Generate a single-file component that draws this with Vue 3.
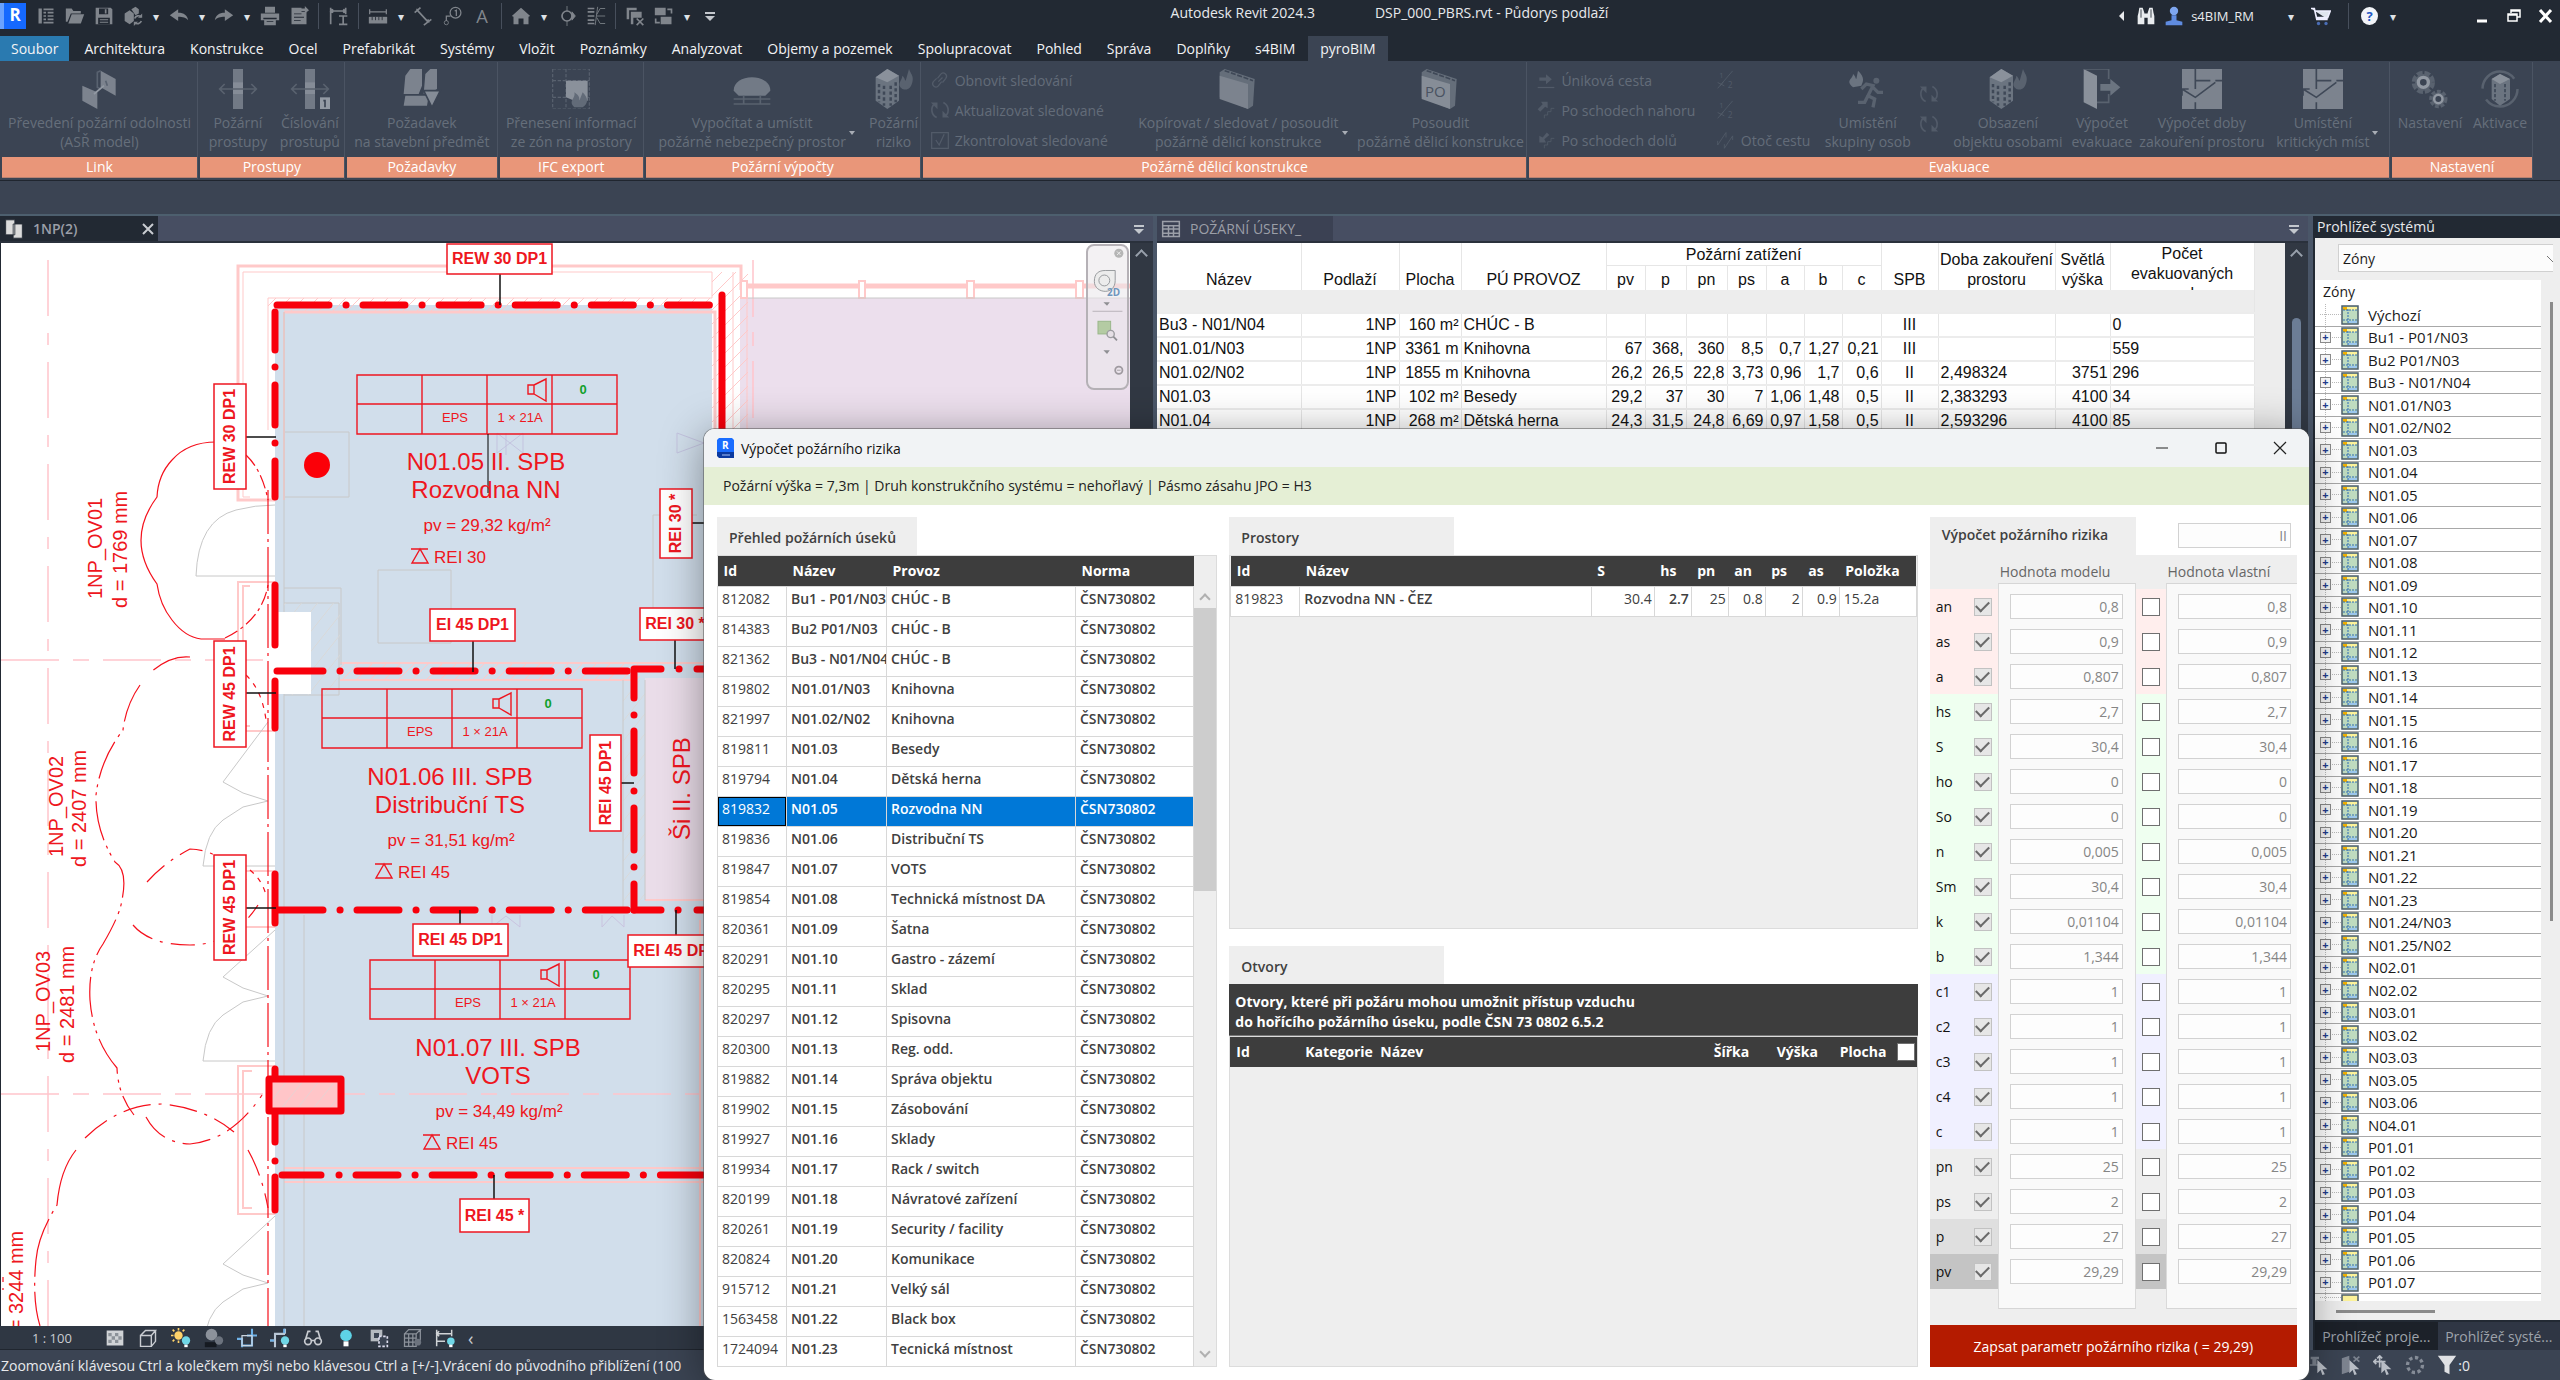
<script setup>
import { ref } from 'vue'

// stroke/fill fragments, all drawn on a 24x24 box
const icons = {
  home: '<path d="M3 3h4v18H3zM9 3h12v2H9zM9 7h3v2H9zM14 7h7v2h-7zM9 11h3v2H9zM14 11h7v2h-7zM9 15h3v2H9zM14 15h7v2h-7zM9 19h12v2H9z" fill="currentColor"/>',
  open: '<path d="M1 3h7l2 3h9v3H7L3 19H1z" fill="currentColor"/><path d="M8 10h15l-4 11H4z" fill="currentColor"/>',
  save: '<path d="M2 2h18l2 2v18H2z" fill="currentColor"/><path d="M6 3h11v7H6zM5 14h14v8H5z" fill="#222933"/><path d="M13 4h2v5h-2zM7 16h10v1H7zM7 19h10v1H7z" fill="currentColor"/>',
  sync: '<path d="M2 9l6-4 5 4v9l-5 4-6-4zM10 4l5-3 4 3v5l-4 2z" fill="currentColor"/><path d="M14 15a5 5 0 0 1 8-2M22 18a5 5 0 0 1-8 2" stroke="currentColor" stroke-width="2" fill="none"/><path d="M23 9v5h-5zM13 24v-5h5z" fill="currentColor"/>',
  undo: '<path d="M1 11l10-7v4c7 0 11 3 12 9-3-3-6-4-12-4v5z" fill="currentColor"/>',
  redo: '<path d="M23 11L13 4v4C6 8 2 11 1 17c3-3 6-4 12-4v5z" fill="currentColor"/>',
  print: '<path d="M6 1h12v7H6zM1 9h22v8H1zM5 15h14v8H5z" fill="currentColor"/><path d="M4 14h16v2H4zM8 18h8v1H8z" fill="#222933"/>',
  pdf: '<path d="M3 2h12v5h6v15H3z" fill="currentColor"/><path d="M6 9h9v1H6zM6 13h12v1H6zM6 17h8v1H6z" fill="#222933"/><path d="M13 3h6V0l5 5-5 4V6h-6z" fill="currentColor"/>',
  dimv: '<path d="M2 2v20M2 6h18M20 2v8M12 12h10M17 12v10M12 22h10M5 4L2 6l3 2M17 4l3 2-3 2" stroke="currentColor" stroke-width="2" fill="none"/>',
  measure: '<path d="M2 4v6M2 7h20M22 4v6" stroke="currentColor" stroke-width="1.5" fill="none"/><path d="M1 13h22v8H1z" fill="currentColor"/><path d="M5 13v4M9 13v4M13 13v4M17 13v4" stroke="#222933"/>',
  align: '<path d="M2 8L9 2M5 5l13 14M13 23l9-7M4 4l3 1M19 20l-1-4" stroke="currentColor" stroke-width="2" fill="none"/>',
  tag: '<circle cx="15" cy="8" r="6.500" stroke="currentColor" stroke-width="1.500" fill="none"/><path d="M14 6l2-1v7M9 12H4v6" stroke="currentColor" stroke-width="1.500" fill="none"/><circle cx="4" cy="20" r="2.500" stroke="currentColor" fill="none"/>',
  text: '<text x="12" y="20" text-anchor="middle" font-size="22" font-family="Open Sans, sans-serif" fill="currentColor">A</text>',
  house: '<path d="M1 12L12 2l11 10-2 1v9h-6v-7H9v7H3v-9z" fill="currentColor"/>',
  section: '<circle cx="12" cy="12" r="6" stroke="currentColor" stroke-width="2" fill="none"/><path d="M12 0v6M12 18v6M18 7l4 5-4 5z" stroke="currentColor" fill="currentColor"/>',
  thin: '<path d="M2 3h8M2 7h8M2 12h8M2 17h8M2 21h8" stroke="currentColor" stroke-width="2"/><path d="M13 10l4-7h6M13 12h10M13 14l4 7h6M11 23L14 1" stroke="currentColor" fill="none"/>',
  closeViews: '<path d="M2 2h12v3H5v11H2z" fill="currentColor"/><path d="M7 7h13v7H10v8H7z" fill="currentColor"/><path d="M14 15l8 8M22 15l-8 8" stroke="currentColor" stroke-width="2"/>',
  switchViews: '<path d="M1 2h13v9H1zM8 13h13v9H8z" fill="currentColor"/><path d="M16 4h5v5M7 20H2v-5" stroke="currentColor" stroke-width="2" fill="none"/>',
  link2: '<path d="M13 1l9 5v10l-9-5zM2 10l9 4v10l-9-5z" fill="#7c838e"/><path d="M13 1l-2 1v9l2 1M16 7l1 3" stroke="#596270" fill="none"/><path d="M9 15l6-5" stroke="#9299a3"/>',
  pipe: '<path d="M9 0h6v24H9z" fill="#727a86"/><path d="M9 8h6v7H9z" fill="#858c97"/><path d="M1 12h22M4 9l-3 3 3 3M20 9l3 3-3 3" stroke="#59626f" fill="none"/>',
  pipeNo: '<path d="M9 0h6v24H9z" fill="#727a86"/><path d="M9 8h6v7H9z" fill="#858c97"/><path d="M1 12h22M4 9l-3 3 3 3M20 9l3 3-3 3" stroke="#59626f" fill="none"/><rect x="18" y="17" width="6" height="7" fill="#939aa4"/><path d="M20 19h1v4" stroke="#3b4453" fill="none"/>',
  request: '<path d="M2 4l3-4h7v10l-2 5H1zM14 3l3-3h4v12l-5 3h-3zM2 16h14l-1 6H1z" fill="#7c838e"/><path d="M13 13h10l-5 10z" fill="#858c97" stroke="#3b4453"/>',
  ifc: '<path d="M1 0h22v24H1zM9 0v24M1 7h22M1 17h22" stroke="#59626f" stroke-width=".7" fill="none" stroke-dasharray="2 1"/><path d="M9 7h13v12h-8L9 17z" fill="#8a919b"/><path d="M14 23c-4-4 1-5 0-9 3 2 3 3 3 5l2-5c4 4 3 7 0 9z" fill="#626b78"/>',
  space: '<path d="M1 13c0-5 5-8 11-8s11 3 11 8l-3 3H4z" fill="#727a86"/><path d="M7 16v5M17 16v5M1 18h22M1 21h22" stroke="#59626f"/>',
  building: '<path d="M1 5l7-5 7 4v15l-7 5-7-5z" fill="#6b7480"/><path d="M1 5l7-5 7 4-7 4z" fill="#8a919b"/><path d="M3 9v11M6 10v12M10 10v12M13 8v12" stroke="#3f4857" stroke-width="1.500" stroke-dasharray="2 1.500"/><path d="M17 12c-4-3 0-5 0-8 2 2 1 2 2 3l2-7c1 3 3 4 2 8s-3 5-6 4z" fill="#59626f"/>',
  wall: '<path d="M1 2l3-2 18 6-1 16-3 2L1 17z" fill="#656e7a"/><path d="M1 4l17 5v15L1 18z" fill="#7c838e"/><path d="M4 1l17 6" stroke="#3f4857" stroke-dasharray="3 1"/>',
  wallPo: '<path d="M1 2l3-2 18 6-1 16-3 2L1 17z" fill="#656e7a"/><path d="M1 4l17 5v15L1 18z" fill="#868d97"/><path d="M4 1l17 6" stroke="#3f4857" stroke-dasharray="3 1"/><text x="3" y="17" font-size="9" font-family="Open Sans, sans-serif" fill="#4a5361">PO</text>',
  chain: '<path d="M10 14l5-5M9 10l4-5c3-4 9 1 6 5l-4 5M14 14l-4 5c-3 4-9-1-6-5l4-4" stroke="currentColor" stroke-width="1.500" fill="none"/>',
  refresh: '<path d="M8 21A10 10 0 0 1 5 5M16 3a10 10 0 0 1 3 16" stroke="currentColor" stroke-width="2" fill="none"/><path d="M1 3h8v8zM23 21h-8v-8z" fill="currentColor"/>',
  check: '<path d="M2 3h20v19H2zM7 12l4 6 6-13" stroke="currentColor" stroke-width="1.500" fill="none"/>',
  exit: '<path d="M2 21h20" stroke="currentColor" stroke-width="1.500"/><path d="M4 9h8V5l7 6-7 6v-4H4z" fill="currentColor"/>',
  up: '<path d="M2 11l6-6-2-3h8v8l-3-2-6 6z" fill="currentColor"/><path d="M10 22v-4h4v-4h4v-4h4" stroke="currentColor" fill="none"/>',
  down: '<path d="M13 3L8 9l-4-2v8h8l-2-4 6-5z" fill="currentColor"/><path d="M10 22v-4h4v-4h4v-4h4" stroke="currentColor" fill="none"/>',
  half: '<path d="M2 22L20 1M2 15l8 4M9 14l-4 5" stroke="currentColor" fill="none"/><text x="4" y="9" font-size="9" fill="currentColor">1</text><text x="14" y="22" font-size="10" fill="currentColor">2</text>',
  turn: '<path d="M2 18L12 3M12 3v6M2 18v-5M10 22L20 7M10 22v-5M20 7v5" stroke="currentColor" fill="none"/>',
  runner: '<path d="M3 11c-5-4 0-5 0-8 2 2 1 2 2 3l1-5c3 3 4 5 2 9z" fill="#6b7480"/><circle cx="17" cy="7" r="1.800" fill="#59626f"/><path d="M8 12l3-3 4 1-3 6 4 2-1 5M12 16l-2 4H6M15 11l3 3h3" stroke="#59626f" stroke-width="2" fill="none"/>',
  door: '<path d="M1 0l8 4v20l-8-4z" fill="#8a919b"/><path d="M1 0h15v6M16 15v5H9" stroke="#59626f" fill="none"/><path d="M11 9h6V6l6 5-6 5v-3h-6z" fill="#6b7480"/>',
  smoke: '<path d="M0 0h24v24H0z" fill="#7c838e"/><path d="M8 0v12M8 7h9M20 7h4M0 12l8 5L20 8M0 12v4M0 12h4M8 20v4" stroke="#3f4857" fill="none"/>',
  gears: '<circle cx="8" cy="8" r="5" stroke="#59626f" stroke-width="4" stroke-dasharray="3 1" fill="#59626f"/><circle cx="8" cy="8" r="3" stroke="#9299a3" stroke-width="2" fill="#3b4453"/><circle cx="17" cy="18" r="4" stroke="#59626f" stroke-width="3" stroke-dasharray="2 1" fill="#59626f"/><circle cx="17" cy="18" r="2.500" stroke="#9299a3" stroke-width="1.500" fill="#3b4453"/>',
  activate: '<circle cx="12" cy="12" r="10.500" stroke="#59626f" stroke-width="1.500" fill="none" stroke-dasharray="26 7"/><path d="M7 6l5-3 6 3v12l-6 4-5-4z" fill="#6b7480"/><path d="M7 6l5-3 6 3-6 3z" fill="#8a919b"/><path d="M9 9v10M15 9v10" stroke="#3f4857" stroke-dasharray="2 1"/>',
  binoculars: '<path d="M3 8l1-6h4l2 6v14H2V12zM14 8l2-6h4l1 6 1 4v10h-8zM10 9h4v5h-4z" fill="#e9ecef"/><path d="M6 4v10M18 4v10" stroke="#222933"/>',
  user: '<circle cx="12" cy="6" r="5" fill="#7ea6f0"/><path d="M9 11h6v6l7 2v4H2v-4l7-2z" fill="#5f8be0"/>',
  cart: '<path d="M0 3h4l3 13h13M5 6h18l-3 8H7" stroke="#eef" stroke-width="2" fill="#dfe5ee"/><circle cx="9" cy="21" r="2" fill="#4a6db5"/><circle cx="18" cy="21" r="2" fill="#4a6db5"/>',
  pages: '<path d="M2 1h11v18H2zM11 6h11v17H11z" fill="#dcdcdc" stroke="#222933"/>',
  sheet: '<path d="M2 3h20v18H2zM2 8h20M2 12h20M2 17h20M9 8v13M15 8v13" stroke="currentColor" stroke-width="1.800" fill="none"/>',
  detail: '<path d="M2 3h20v18H2z" fill="#d0d3d6"/><path d="M4 6h4v4H4zM12 6h4v4h-4zM8 10h4v4H8zM16 10h4v4h-4zM4 14h4v4H4zM12 14h4v4h-4z" fill="#8c9299"/>',
  cube: '<path d="M3 9h13v13H3zM3 9l6-6h12l-5 6M21 3v13l-5 6" stroke="currentColor" stroke-width="1.700" fill="none"/>',
  sun: '<circle cx="9" cy="9" r="5" fill="#ffd36a"/><path d="M9 0v3M0 9h3M2 2l2 2M16 2l-2 2M2 16l2-2M9 15v3" stroke="#ffd36a" stroke-width="2"/><circle cx="18" cy="15" r="5" fill="#6fd6e6"/><path d="M16 20h4v3h-4z" fill="#fff"/>',
  ghost: '<circle cx="9" cy="8" r="7" fill="#8c929b"/><path d="M1 17h14v6H1z" fill="#151a21"/><circle cx="18" cy="15" r="5" fill="#6c737e"/>',
  crop: '<path d="M0 13h6v10M6 21h12V9M12 9h12M18 1v8" stroke="#6fb2e8" stroke-width="2.500" fill="none"/><path d="M6 21V9h12v12z" stroke="#c9d4df" stroke-width="1.500" fill="none"/>',
  cropOn: '<path d="M0 15h6M6 23V7h12M18 1v6" stroke="#b9c7d6" stroke-width="2.500" fill="none"/><path d="M0 15h5M17 1v5" stroke="#6fb2e8" stroke-width="2.500"/><circle cx="18" cy="15" r="5" fill="#6fd6e6"/><path d="M16 20h4v3h-4z" fill="#fff"/>',
  glasses: '<circle cx="6" cy="16" r="4" stroke="currentColor" stroke-width="2" fill="none"/><circle cx="18" cy="16" r="4" stroke="currentColor" stroke-width="2" fill="none"/><path d="M3 14L6 4h3M21 14L18 4h-3M10 15h4" stroke="currentColor" stroke-width="2" fill="none"/>',
  bulb: '<circle cx="12" cy="9" r="7" fill="#5ed3e6"/><path d="M9 16h6v6H9z" fill="#fff"/>',
  temp: '<path d="M2 2h14v14H2z" fill="#b5bac0"/><path d="M6 6h6v6H6z" fill="#3b4453"/><path d="M12 10h10v12H12z" stroke="#dde" stroke-dasharray="3 2" stroke-width="2" fill="#3b4453"/>',
  analytic: '<path d="M3 7h14v15H3zM3 12h14M3 17h14M8 7v15M13 7v15M3 7l5-5h14l-5 5M22 2v13" stroke="#8c929b" stroke-width="1.500" fill="none"/><circle cx="19" cy="17" r="4" fill="#6c737e"/>',
  constrain: '<path d="M2 2v20M2 7h18M20 2v8M5 4L2 7l3 3M2 16h10" stroke="#d0d3d6" stroke-width="1.800" fill="none"/><circle cx="19" cy="16" r="4.500" fill="#6fd6e6"/><path d="M17 20h4v3h-4z" fill="#fff"/>',
  selLink: '<path d="M2 2h10v3H9v6h4v2H1v-2h3V5H2z" fill="#7d8490"/><path d="M10 6l12 11h-6l3 6-3 1-2-6-4 4z" fill="#b9bec6"/>',
  selFace: '<path d="M1 4l9-3v19l-9 3z" fill="#7d8490"/><path d="M15 2l7 6M22 2l-7 6" stroke="#7d8490" stroke-width="2"/><path d="M10 6l12 11h-6l3 6-3 1-2-6-4 4z" fill="#b9bec6"/>',
  selDrag: '<path d="M8 1v14M1 8h14M5 4l3-3 3 3M4 5L1 8l3 3" stroke="#b9bec6" stroke-width="2" fill="none"/><path d="M10 6l12 11h-6l3 6-3 1-2-6-4 4z" fill="#b9bec6"/>',
  spinner: '<circle cx="12" cy="12" r="9" stroke="#858c97" stroke-width="4" stroke-dasharray="4 3" fill="none"/>',
  filter: '<path d="M1 1h22l-8 11v11l-6-3v-8z" fill="#dfe1e4"/>',
}

const quickAccess = [
  'home', 'open', 'save', 'sync', 'caret', 'undo', 'caret', 'redo', 'caret', 'print', 'pdf', 'sep',
  'dimv', 'sep', 'measure', 'caret', 'align', 'tag', 'text', 'sep',
  'house', 'caret', 'section', 'thin', 'sep', 'closeViews', 'switchViews', 'caret', 'more',
]

const tabs = [
  'Soubor', 'Architektura', 'Konstrukce', 'Ocel', 'Prefabrikát', 'Systémy', 'Vložit', 'Poznámky', 'Analyzovat',
  'Objemy a pozemek', 'Spolupracovat', 'Pohled', 'Správa', 'Doplňky', 's4BIM', 'pyroBIM',
]

// w is the share of the ribbon that the item takes
const ribbon = [
  { title: 'Link', w: 195, items: [{ w: 195, icon: 'link2', lines: ['Převedení požární odolnosti', '(ASŘ model)'] }] },
  {
    title: 'Prostupy', w: 144, items: [
      { w: 76, icon: 'pipe', lines: ['Požární', 'prostupy'] },
      { w: 68, icon: 'pipeNo', lines: ['Číslování', 'prostupů'] },
    ],
  },
  { title: 'Požadavky', w: 150, items: [{ w: 150, icon: 'request', lines: ['Požadavek', 'na stavební předmět'] }] },
  { title: 'IFC export', w: 143, items: [{ w: 143, icon: 'ifc', lines: ['Přenesení informací', 'ze zón na prostory'] }] },
  {
    title: 'Požární výpočty', w: 274, items: [
      { w: 222, icon: 'space', lines: ['Vypočítat a umístit', 'požárně nebezpečný prostor'], caret: true },
      { w: 52, icon: 'building', lines: ['Požární', 'riziko'] },
    ],
  },
  {
    title: 'Požárně dělicí konstrukce', w: 604, items: [
      {
        w: 204, small: [
          { icon: 'chain', label: 'Obnovit sledování' },
          { icon: 'refresh', label: 'Aktualizovat sledované' },
          { icon: 'check', label: 'Zkontrolovat sledované' },
        ],
      },
      { w: 226, icon: 'wall', lines: ['Kopírovat / sledovat / posoudit', 'požárně dělicí konstrukce'], caret: true },
      { w: 174, icon: 'wallPo', lines: ['Posoudit', 'požárně dělicí konstrukce'] },
    ],
  },
  {
    title: 'Evakuace', w: 860, items: [
      {
        w: 176, small: [
          { icon: 'exit', label: 'Úniková cesta' },
          { icon: 'up', label: 'Po schodech nahoru' },
          { icon: 'down', label: 'Po schodech dolů' },
        ],
      },
      { w: 106, small: [{ icon: 'half', label: '' }, { icon: 'half', label: '' }, { icon: 'turn', label: 'Otoč cestu' }] },
      { w: 98, icon: 'runner', lines: ['Umístění', 'skupiny osob'] },
      { w: 32, low: true, small: [{ icon: 'refresh', label: '' }, { icon: 'refresh', label: '' }] },
      { w: 118, icon: 'building', lines: ['Obsazení', 'objektu osobami'] },
      { w: 74, icon: 'door', lines: ['Výpočet', 'evakuace'] },
      { w: 130, icon: 'smoke', lines: ['Výpočet doby', 'zakouření prostoru'] },
      { w: 126, icon: 'smoke', lines: ['Umístění', 'kritických míst'], caret: true },
    ],
  },
  {
    title: 'Nastavení', w: 140, items: [
      { w: 76, icon: 'gears', lines: ['Nastavení'] },
      { w: 64, icon: 'activate', lines: ['Aktivace'] },
    ],
  },
]

const viewControls = ['detail', 'cube', 'sun', 'ghost', 'crop', 'cropOn', 'glasses', 'bulb', 'temp', 'analytic', 'constrain']

const equipment = [{ x: 357, y: 375 }, { x: 322, y: 689 }, { x: 370, y: 960 }]

const rooms = [
  { x: 486, y: 470, name: 'N01.05 II. SPB', use: 'Rozvodna NN', pv: 'pv = 29,32 kg/m²', rei: 'REI 30' },
  { x: 450, y: 785, name: 'N01.06 III. SPB', use: 'Distribuční TS', pv: 'pv = 31,51 kg/m²', rei: 'REI 45' },
  { x: 498, y: 1056, name: 'N01.07 III. SPB', use: 'VOTS', pv: 'pv = 34,49 kg/m²', rei: 'REI 45' },
]

const wallTags = [
  { x: 447, y: 244, w: 105, h: 30, text: 'REW 30 DP1', lead: 'M500 274V305' },
  { x: 430, y: 609, w: 85, h: 32, text: 'EI 45 DP1', lead: 'M473 641V672' },
  { x: 640, y: 608, w: 70, h: 32, text: 'REI 30 *', lead: 'M675 640V669' },
  { x: 413, y: 924, w: 95, h: 32, text: 'REI 45 DP1', lead: 'M460 924V910' },
  { x: 628, y: 935, w: 95, h: 32, text: 'REI 45 DP1', lead: 'M676 935V910' },
  { x: 460, y: 1199, w: 69, h: 33, text: 'REI 45 *', lead: 'M494 1199V1175' },
  { x: 214, y: 384, w: 32, h: 105, text: 'REW 30 DP1', lead: 'M246 437H276', up: true },
  { x: 214, y: 641, w: 32, h: 106, text: 'REW 45 DP1', lead: 'M246 693H276', up: true },
  { x: 214, y: 855, w: 32, h: 105, text: 'REW 45 DP1', lead: 'M246 908H276', up: true },
  { x: 660, y: 489, w: 32, h: 69, text: 'REI 30 *', lead: 'M692 523H704', up: true },
  { x: 590, y: 735, w: 31, h: 96, text: 'REI 45 DP1', lead: 'M621 783H634', up: true },
]

const distances = [
  { x: 102, y: 599, text: '1NP_OV01' },
  { x: 127, y: 608, text: 'd = 1769 mm' },
  { x: 63, y: 857, text: '1NP_OV02' },
  { x: 86, y: 867, text: 'd = 2407 mm' },
  { x: 50, y: 1052, text: '1NP_OV03' },
  { x: 74, y: 1063, text: 'd = 2481 mm' },
  { x: 23, y: 1348, text: 'd = 3244 mm' },
]

const loads = ['pv', 'p', 'pn', 'ps', 'a', 'b', 'c']
const scheduleCols = [144, 98, 62, 145, 39, 41, 41, 39, 38, 38, 39, 57, 117, 55, 144]
const schedule = [
  ['Bu3 - N01/N04', '1NP', '160 m²', 'CHÚC - B', '', '', '', '', '', '', '', 'III', '', '', '0'],
  ['N01.01/N03', '1NP', '3361 m', 'Knihovna', '67', '368,', '360', '8,5', '0,7', '1,27', '0,21', 'III', '', '', '559'],
  ['N01.02/N02', '1NP', '1855 m', 'Knihovna', '26,2', '26,5', '22,8', '3,73', '0,96', '1,7', '0,6', 'II', '2,498324', '3751', '296'],
  ['N01.03', '1NP', '102 m²', 'Besedy', '29,2', '37', '30', '7', '1,06', '1,48', '0,5', 'II', '2,383293', '4100', '34'],
  ['N01.04', '1NP', '268 m²', 'Dětská herna', '24,3', '31,5', '24,8', '6,69', '0,97', '1,58', '0,5', 'II', '2,593296', '4100', '85'],
]

const compartments = [
  ['812082', 'Bu1 - P01/N03', 'CHÚC - B'],
  ['814383', 'Bu2 P01/N03', 'CHÚC - B'],
  ['821362', 'Bu3 - N01/N04', 'CHÚC - B'],
  ['819802', 'N01.01/N03', 'Knihovna'],
  ['821997', 'N01.02/N02', 'Knihovna'],
  ['819811', 'N01.03', 'Besedy'],
  ['819794', 'N01.04', 'Dětská herna'],
  ['819832', 'N01.05', 'Rozvodna NN'],
  ['819836', 'N01.06', 'Distribuční TS'],
  ['819847', 'N01.07', 'VOTS'],
  ['819854', 'N01.08', 'Technická místnost DA'],
  ['820361', 'N01.09', 'Šatna'],
  ['820291', 'N01.10', 'Gastro - zázemí'],
  ['820295', 'N01.11', 'Sklad'],
  ['820297', 'N01.12', 'Spisovna'],
  ['820300', 'N01.13', 'Reg. odd.'],
  ['819882', 'N01.14', 'Správa objektu'],
  ['819902', 'N01.15', 'Zásobování'],
  ['819927', 'N01.16', 'Sklady'],
  ['819934', 'N01.17', 'Rack / switch'],
  ['820199', 'N01.18', 'Návratové zařízení'],
  ['820261', 'N01.19', 'Security / facility'],
  ['820824', 'N01.20', 'Komunikace'],
  ['915712', 'N01.21', 'Velký sál'],
  ['1563458', 'N01.22', 'Black box'],
  ['1724094', 'N01.23', 'Tecnická místnost'],
]
const selected = ref('819832')

const params = [
  { name: 'an', value: '0,8', tone: 'red' },
  { name: 'as', value: '0,9', tone: 'red' },
  { name: 'a', value: '0,807', tone: 'red' },
  { name: 'hs', value: '2,7', tone: 'green' },
  { name: 'S', value: '30,4', tone: 'green' },
  { name: 'ho', value: '0', tone: 'green' },
  { name: 'So', value: '0', tone: 'green' },
  { name: 'n', value: '0,005', tone: 'green' },
  { name: 'Sm', value: '30,4', tone: 'green' },
  { name: 'k', value: '0,01104', tone: 'green' },
  { name: 'b', value: '1,344', tone: 'green' },
  { name: 'c1', value: '1', tone: 'blue' },
  { name: 'c2', value: '1', tone: 'blue' },
  { name: 'c3', value: '1', tone: 'blue' },
  { name: 'c4', value: '1', tone: 'blue' },
  { name: 'c', value: '1', tone: 'blue' },
  { name: 'pn', value: '25', tone: 'plain' },
  { name: 'ps', value: '2', tone: 'plain' },
  { name: 'p', value: '27', tone: 'gray' },
  { name: 'pv', value: '29,29', tone: 'dark' },
]

const range = (prefix, from, to) =>
  Array.from({ length: to - from + 1 }, (_, i) => prefix + String(from + i).padStart(2, '0'))

const zones = [
  'Výchozí', 'Bu1 - P01/N03', 'Bu2 P01/N03', 'Bu3 - N01/N04', 'N01.01/N03', 'N01.02/N02',
  ...range('N01.', 3, 23),
  'N01.24/N03', 'N01.25/N02', 'N02.01', 'N02.02', 'N03.01', 'N03.02', 'N03.03', 'N03.05', 'N03.06', 'N04.01',
  ...range('P01.', 1, 7),
]
</script>

<template>
  <div class="app">
    <header class="titlebar">
      <div class="quick">
        <span class="logo">R</span>
        <template v-for="(item, i) in quickAccess" :key="i">
          <span v-if="item === 'sep'" class="qsep"></span>
          <span v-else-if="item === 'caret'" class="qcaret">▾</span>
          <button v-else-if="item === 'more'" class="qbtn" aria-label="Další"><span class="overflow"></span></button>
          <button v-else class="qbtn" :aria-label="item">
            <svg viewBox="0 0 24 24" v-html="icons[item]"></svg>
          </button>
        </template>
      </div>
      <div class="doc-title">
        <span>Autodesk Revit 2024.3</span>
        <span>DSP_000_PBRS.rvt - Půdorys podlaží</span>
      </div>
      <div class="account">
        <span class="tri-left"></span>
        <button class="qbtn" aria-label="Hledat"><svg viewBox="0 0 24 24" v-html="icons.binoculars"></svg></button>
        <button class="user"><svg viewBox="0 0 24 24" v-html="icons.user"></svg>s4BIM_RM</button>
        <span class="qcaret">▾</span>
        <button class="qbtn cart" aria-label="Obchod"><svg viewBox="0 0 24 24" v-html="icons.cart"></svg></button>
        <span class="qsep"></span>
        <button class="help" aria-label="Nápověda">?</button>
        <span class="qcaret">▾</span>
      </div>
      <div class="window-btns">
        <button aria-label="Minimalizovat"><svg viewBox="0 0 18 18"><path d="M4 14h10" stroke="#fff" stroke-width="3" /></svg></button>
        <button aria-label="Obnovit"><svg viewBox="0 0 18 18"><path d="M6 6V3h9v7h-3M3 7h9v7H3zM3 8h9M6 4h9" stroke="#fff" stroke-width="1.500" fill="none" /></svg></button>
        <button aria-label="Zavřít"><svg viewBox="0 0 18 18"><path d="M3 3l11 12M14 3L3 15" stroke="#fff" stroke-width="3" /></svg></button>
      </div>
    </header>

    <nav class="tabs">
      <button v-for="tab in tabs" :key="tab" class="tab" :class="{ file: tab === 'Soubor', active: tab === 'pyroBIM' }">{{ tab }}</button>
    </nav>

    <section class="ribbon">
      <div v-for="group in ribbon" :key="group.title" class="group" :style="{ flexGrow: group.w }">
        <div class="group-items">
          <template v-for="(item, i) in group.items" :key="i">
            <div v-if="item.small" class="small-col" :class="{ low: item.low }" :style="{ flexGrow: item.w }">
              <button v-for="(s, j) in item.small" :key="j" class="small-btn" :aria-label="s.label || s.icon" disabled>
                <svg viewBox="0 0 24 24" v-html="icons[s.icon]"></svg>{{ s.label }}
              </button>
            </div>
            <div v-else class="big-cell" :style="{ flexGrow: item.w }">
              <button class="big-btn" disabled>
                <svg viewBox="0 0 24 24" v-html="icons[item.icon]"></svg>
                <span v-for="line in item.lines" :key="line">{{ line }}</span>
              </button>
              <span v-if="item.caret" class="big-caret"></span>
            </div>
          </template>
        </div>
        <div class="group-title">{{ group.title }}</div>
      </div>
    </section>
    <div class="options-bar"></div>

    <main class="workspace">
      <section class="pane">
        <div class="pane-tabs">
          <button class="view-tab current">
            <svg viewBox="0 0 24 24" v-html="icons.pages"></svg>1NP(2)
            <svg class="tab-close" viewBox="0 0 12 12"><path d="M1 1l10 10M11 1L1 11" stroke="#c9ccd1" stroke-width="2" /></svg>
          </button>
          <span class="overflow"></span>
        </div>
        <div class="pane-body">
          <div class="canvas">
            <svg class="plan" viewBox="1 243 1129 1083" preserveAspectRatio="xMinYMin slice">
              <defs>
                <pattern id="hatch" width="14" height="14" patternUnits="userSpaceOnUse">
                  <path d="M0 14L14 0" stroke="#ffc9c9" />
                </pattern>
                <pattern id="hatchGray" width="16" height="20" patternUnits="userSpaceOnUse">
                  <path d="M0 20L16 0" stroke="#d9d9d9" />
                </pattern>
              </defs>

              <!-- room fills -->
              <path d="M275 305H722V1326H275z" fill="#d1deeb" />
              <rect x="740" y="298" width="390" height="400" fill="#ecdfed" />
              <rect x="645" y="678" width="80" height="222" fill="#eadde9" />

              <!-- axes -->
              <g stroke="#ffc5cb" stroke-width="1.500" fill="none">
                <path d="M48 260V1326" stroke-dasharray="56 17 12 17" />
                <path d="M1 660H275M1 1094H722" stroke-dasharray="58 14 16 14" />
                <path d="M753 260V429" stroke-dasharray="57 15 14 15" />
              </g>

              <!-- faded walls -->
              <rect x="712" y="272" width="28" height="160" fill="#fff" />
              <rect x="712" y="272" width="36" height="160" fill="url(#hatch)" />
              <rect x="268" y="298" width="454" height="14" fill="url(#hatch)" />
              <rect x="340" y="663" width="300" height="16" fill="url(#hatch)" />
              <rect x="623" y="680" width="22" height="230" fill="url(#hatchGray)" />
              <g stroke="#ffc9c9" fill="none">
                <path d="M275 500H238V266H741V290" stroke-width="3" />
                <path d="M250 497H243V272H712" />
                <path d="M268 298H712V272M268 298V430" />
                <path d="M284 312H715V429" stroke-width="3" />
                <path d="M284 312V500" stroke-width="2" />
                <path d="M275 582H238V731H275M250 586H243V726H250M275 871H243V927H275M275 1066H238V1214H275M252 1071H243V1208H252" stroke-width="2" />
                <path d="M748 286H1130" stroke-width="5" />
                <path d="M733 272V429M747 298V429" />
                <path d="M340 663H704M340 680H634M284 1168H704M284 1182H704M700 920V1326" stroke-width="2" />
                <path d="M645 900H704" stroke-width="2" />
              </g>
              <g fill="#fff" stroke="#ffc9c9" stroke-width="2">
                <rect x="741" y="281" width="6" height="17" />
                <rect x="859" y="281" width="6" height="17" />
                <rect x="967" y="281" width="7" height="17" />
                <rect x="1076" y="281" width="7" height="17" />
              </g>

              <!-- grey furniture and doors -->
              <g stroke="#c8c8c8" fill="none">
                <path d="M748 298H1130M284 312V1326M304 915V1326M645 680V900M623 680V910" />
                <path d="M285 432H349V497H285M378 570H451V643H378zM697 515H653V612" />
                <path d="M284 588H341V665M284 603H339V695H284M196 576H275M196 576Q198 520 236 510Q255 505 275 505" />
                <path d="M203 866H275M203 866Q206 832 223 820L243 807L268 801L243 793L223 782L268 722" />
                <path d="M203 1061H275M203 1061Q206 1027 223 1015L243 1002L268 996L243 988L223 977L275 930" />
                <path d="M203 1348H275M203 1348Q206 1314 223 1302L243 1289L268 1283L243 1275L223 1264L275 1216" />
                <path d="M506 433V455M497 433L523 453V433L497 453zM704 443L677 433V453z" stroke="#c3c3df" />
                <path d="M492 915V927L506 916L520 927V915M602 915V927L612 916L624 927V915" stroke="#c9c3df" />
              </g>
              <rect x="284" y="603" width="56" height="92" fill="url(#hatchGray)" />
              <rect x="278" y="612" width="33" height="82" fill="#fff" />
              <rect x="268" y="648" width="43" height="33" fill="#fff" />

              <!-- clearance clouds -->
              <g stroke="#f5101c" stroke-width="1.200" fill="none">
                <path d="M216 442Q188 442 172 460Q158 475 157 497Q125 540 157 584Q160 605 172 620Q185 637 201 639H225" />
                <path d="M225 638Q262 620 268 585M246 455Q262 470 268 500" stroke-dasharray="14 4 3 4" />
                <path d="M268 490V1326" stroke-dasharray="44 5 3 5" />
                <path d="M190 657Q170 655 150 673M140 685Q126 705 123 730Q100 760 96 795Q95 830 115 862Q128 870 122 900Q120 915 103 944Q88 965 90 1000Q93 1040 117 1068Q118 1095 134 1115" stroke-dasharray="40 6 3 5 3 6" />
                <path d="M147 882Q165 862 190 849Q220 850 246 880M133 925Q150 945 190 945Q232 945 258 905" stroke-dasharray="24 8 3 8" />
                <path d="M85 1138Q120 1104 162 1104Q205 1108 234 1132M248 1150Q262 1175 268 1208M146 1117Q160 1143 190 1144Q232 1140 262 1095" stroke-dasharray="28 8 3 8" />
                <path d="M76 1150Q60 1170 57 1205Q38 1235 36 1260Q32 1300 40 1326" stroke-dasharray="60 6 3 6" />
                <path d="M3 1277V1290M246 675Q262 690 266 720M250 870Q262 880 266 895" stroke-dasharray="5 6" />
              </g>

              <!-- fire walls -->
              <g class="fire">
                <path d="M277 305H329M346 305h.1" />
                <path d="M363 305H722" stroke-dasharray="42 17 .1 17" />
                <path d="M722 295V430" />
                <path d="M275 312V350M275 367v.1M275 385V425M275 443v.1M275 461V497M275 585V645M275 681V728M275 874V923M275 1069V1142M275 1161v.1M275 1177V1210" />
                <path d="M277 671H323M340 671h.1" />
                <path d="M357 671H634" stroke-dasharray="42 17 .1 17" />
                <path d="M634 669H661M679 669h.1M697 669H722" />
                <path d="M277 910H323M340 910h.1" />
                <path d="M357 910H634" stroke-dasharray="42 17 .1 17" />
                <path d="M634 910H661M678 910h.1M697 910H722" />
                <path d="M282 1175H321M339 1175h.1" />
                <path d="M356 1175H722" stroke-dasharray="42 17 .1 17" />
                <path d="M634 673V698M634 715v.1M634 731V773M634 791v.1M634 808V850M634 867v.1M634 884V910" />
              </g>
              <rect x="269" y="1079" width="72" height="32" fill="#ffc5c8" stroke="#f5000c" stroke-width="7" stroke-linejoin="round" />
              <rect x="273" y="1083" width="64" height="24" fill="url(#hatchGray)" opacity=".6" />
              <circle cx="317" cy="465" r="13" fill="#fb0008" />

              <g v-for="t in equipment" :key="t.x" :transform="`translate(${t.x} ${t.y})`">
                <path class="thin" d="M0 0H260V59H0zM0 29H260M65 0V59M130 0V59M195 0V59M171 10h6v9h-6zM177 10L189 4V26L177 19" />
                <text class="t13 green" x="226" y="19">0</text>
                <text class="t13" x="98" y="47">EPS</text>
                <text class="t13" x="163" y="47">1 × 21A</text>
              </g>
              <path d="M488 434V493" stroke="#000" />

              <g v-for="r in rooms" :key="r.name" :transform="`translate(${r.x} ${r.y})`">
                <text class="t24" x="0" y="0">{{ r.name }}</text>
                <text class="t24" x="0" y="28">{{ r.use }}</text>
                <text class="t17" x="1" y="61">{{ r.pv }}</text>
                <path class="thin" d="M-75 79H-58M-66 79L-74 93H-58z" />
                <text class="t17" x="-26" y="93">{{ r.rei }}</text>
              </g>

              <g v-for="t in wallTags" :key="t.lead">
                <path :d="t.lead" stroke="#111" stroke-width="1.500" />
                <rect class="tag-box" :x="t.x" :y="t.y" :width="t.w" :height="t.h" />
                <text
                  class="tag-text"
                  :transform="`translate(${t.x + t.w / 2} ${t.y + t.h / 2}) rotate(${t.up ? -90 : 0})`"
                  y="5"
                >{{ t.text }}</text>
              </g>

              <text v-for="d in distances" :key="d.text" class="t20" :transform="`translate(${d.x} ${d.y}) rotate(-90)`">{{ d.text }}</text>
              <text class="t24 start" transform="translate(690 840) rotate(-90)">Ši II. SPB</text>
            </svg>

            <div class="navbar">
              <svg viewBox="0 0 43 146">
                <circle cx="34" cy="8" r="5" fill="#b5b5b5" /><path d="M32 6l4 4M36 6l-4 4" stroke="#eee" />
                <path d="M7 39c0-9 5-12 12-12h11v11c0 8-5 12-11 12S7 46 7 39z" fill="#ececec" stroke="#8f9396" />
                <circle cx="18" cy="38" r="6" fill="none" stroke="#8f9396" />
                <text x="21" y="55" font-size="11" font-weight="bold" font-family="Open Sans, sans-serif" fill="#6f96bd">2D</text>
                <path d="M17 62h7l-3 4zM17 115h7l-3 4z" fill="#8f8f93" />
                <path d="M5 72h33" stroke="#b5aeb5" />
                <rect x="11" y="83" width="14" height="14" fill="#b4cba3" stroke="#96b587" />
                <circle cx="25" cy="97" r="4" fill="#e5dfe5" stroke="#9b9b9f" stroke-width="1.500" /><path d="M28 100l4 4" stroke="#8f8f93" stroke-width="2" />
                <circle cx="34" cy="137" r="4" fill="none" stroke="#9f9aa0" stroke-width="2" /><path d="M32 137h4" stroke="#9f9aa0" />
              </svg>
            </div>
          </div>
          <div class="vscroll"><span class="chev-up"></span></div>
        </div>
        <div class="view-bar">
          <span class="scale">1 : 100</span>
          <button v-for="v in viewControls" :key="v" :aria-label="v"><svg viewBox="0 0 24 24" v-html="icons[v]"></svg></button>
          <span class="less">‹</span>
        </div>
      </section>

      <section class="pane right">
        <div class="pane-tabs">
          <button class="view-tab"><svg viewBox="0 0 24 24" v-html="icons.sheet"></svg>POŽÁRNÍ ÚSEKY_</button>
          <span class="overflow"></span>
        </div>
        <div class="pane-body">
          <div class="schedule">
            <table>
              <colgroup><col v-for="(w, i) in scheduleCols" :key="i" :style="{ width: w + 'px' }" /></colgroup>
              <thead>
                <tr class="h1">
                  <th rowspan="2">Název</th>
                  <th rowspan="2">Podlaží</th>
                  <th rowspan="2">Plocha</th>
                  <th rowspan="2">PÚ PROVOZ</th>
                  <th colspan="7" class="over">Požární zatížení</th>
                  <th rowspan="2">SPB</th>
                  <th rowspan="2">Doba zakouření<br />prostoru</th>
                  <th rowspan="2">Světlá<br />výška</th>
                  <th rowspan="2"><div class="clip">Počet<br />evakuovaných<br />osob</div></th>
                </tr>
                <tr class="h2"><th v-for="l in loads" :key="l">{{ l }}</th></tr>
              </thead>
              <tbody>
                <tr class="blank"><td colspan="15"></td></tr>
                <tr v-for="row in schedule" :key="row[0]">
                  <td v-for="(cell, i) in row" :key="i" :class="{ num: [1, 2, 4, 5, 6, 7, 8, 9, 10, 13].includes(i), mid: i === 11 }">{{ cell }}</td>
                </tr>
              </tbody>
            </table>
          </div>
          <div class="vscroll"><span class="chev-up"></span><span class="thumb"></span></div>
        </div>
      </section>

      <aside class="browser">
        <h2>Prohlížeč systémů</h2>
        <div class="browser-body">
          <select aria-label="Pohled prohlížeče"><option>Zóny</option></select>
          <div class="tree-row">
            <div class="tree">
              <div class="tree-head">Zóny</div>
              <ul>
                <li v-for="(z, i) in zones" :key="z">
                  <span class="node"><button v-if="i" :aria-label="'Rozbalit ' + z">+</button></span>
                  <svg viewBox="0 0 18 20">
                    <rect x="1" y="1" width="16" height="18" fill="#bfdcc0" stroke="#4c5f6b" stroke-width="1.500" />
                    <path d="M2 2h4v3H2z" fill="#f2b100" /><path d="M6 2h10v3H6z" fill="#fdf39b" /><path d="M7 16h9v2H7z" fill="#9cc8ee" />
                    <path d="M7 4v15M2 5h15M2 15h15" stroke="#2f6db5" stroke-dasharray="2 1" />
                  </svg>
                  <span>{{ z }}</span>
                </li>
                <li class="cut"><span class="node"></span><svg viewBox="0 0 18 20"><rect x="1" y="1" width="16" height="18" fill="#fdf39b" stroke="#4c5f6b" stroke-width="1.500" /></svg></li>
              </ul>
            </div>
            <div class="tree-scroll"><span></span></div>
          </div>
          <div class="hscroll"><span></span></div>
        </div>
        <div class="browser-tabs">
          <button class="on">Prohlížeč proje...</button>
          <button>Prohlížeč systé...</button>
        </div>
      </aside>
    </main>

    <footer class="status">
      <span>Zoomování klávesou Ctrl a kolečkem myši nebo klávesou Ctrl a [+/-].Vrácení do původního přiblížení (100</span>
      <div class="status-icons">
        <svg v-for="s in ['selLink', 'selFace', 'selDrag', 'spinner', 'filter']" :key="s" viewBox="0 0 24 24" v-html="icons[s]"></svg>
        <span>:0</span>
      </div>
    </footer>

    <div class="dialog" role="dialog" aria-label="Výpočet požárního rizika">
      <div class="dialog-title">
        <svg class="app-icon" viewBox="0 0 18 20">
          <path d="M3 0h13l2 2v12H1V2z" fill="#1a6dff" /><path d="M1 14h17v6H3l-2-2z" fill="#0b3aa0" />
          <text x="6" y="11" font-size="10" font-weight="bold" font-family="Open Sans, sans-serif" fill="#fff">R</text>
          <path d="M6 17h8" stroke="#a9c2f5" />
        </svg>
        <span>Výpočet požárního rizika</span>
        <button aria-label="Minimalizovat"><svg viewBox="0 0 14 14"><path d="M1 7h12" stroke="#222" /></svg></button>
        <button aria-label="Maximalizovat"><svg viewBox="0 0 14 14"><rect x="2" y="2" width="10" height="10" rx="1" fill="none" stroke="#111" stroke-width="1.500" /></svg></button>
        <button aria-label="Zavřít"><svg viewBox="0 0 14 14"><path d="M1 1l12 12M13 1L1 13" stroke="#222" stroke-width="1.200" /></svg></button>
      </div>
      <div class="dialog-info">Požární výška = 7,3m | Druh konstrukčního systému = nehořlavý | Pásmo zásahu JPO = H3</div>

      <div class="dialog-body">
        <section class="col">
          <h3 class="caption w-list">Přehled požárních úseků</h3>
          <div class="grid-box with-scroll">
            <table class="grid list">
              <colgroup><col class="l-id" /><col class="l-name" /><col class="l-use" /><col /></colgroup>
              <thead><tr><th>Id</th><th>Název</th><th>Provoz</th><th>Norma</th></tr></thead>
              <tbody>
                <tr v-for="c in compartments" :key="c[0]" :class="{ selected: c[0] === selected }" @click="selected = c[0]">
                  <td class="light">{{ c[0] }}</td><td>{{ c[1] }}</td><td>{{ c[2] }}</td><td>ČSN730802</td>
                </tr>
              </tbody>
            </table>
            <div class="grid-scroll"><span class="chev up"></span><span class="grid-thumb"></span><span class="chev down"></span></div>
          </div>
        </section>

        <section class="col">
          <h3 class="caption w-spaces">Prostory</h3>
          <div class="grid-box spaces-box">
            <table class="grid spaces">
              <colgroup>
                <col class="s-id" /><col /><col class="s-area" /><col v-for="n in 5" :key="n" class="s-num" /><col class="s-item" />
              </colgroup>
              <thead><tr><th>Id</th><th>Název</th><th>S</th><th>hs</th><th>pn</th><th>an</th><th>ps</th><th>as</th><th>Položka</th></tr></thead>
              <tbody>
                <tr>
                  <td class="light">819823</td><td>Rozvodna NN - ČEZ</td><td class="light r">30.4</td><td class="r">2.7</td>
                  <td class="light r">25</td><td class="light r">0.8</td><td class="light r">2</td><td class="light r">0.9</td><td class="light">15.2a</td>
                </tr>
              </tbody>
            </table>
          </div>
          <h3 class="caption w-open">Otvory</h3>
          <p class="notice">Otvory, které při požáru mohou umožnit přístup vzduchu<br />do hořícího požárního úseku, podle ČSN 73 0802 6.5.2</p>
          <div class="grid-box openings-box">
            <table class="grid openings">
              <colgroup><col class="s-id" /><col class="o-cat" /><col /><col class="s-area" /><col class="s-area" /><col class="s-area" /><col class="o-chk" /></colgroup>
              <thead>
                <tr>
                  <th>Id</th><th>Kategorie</th><th>Název</th><th>Šířka</th><th>Výška</th><th>Plocha</th>
                  <th><input type="checkbox" class="chk" aria-label="Vybrat vše" /></th>
                </tr>
              </thead>
            </table>
          </div>
        </section>

        <section class="col">
          <div class="risk-head">
            <h3>Výpočet požárního rizika</h3>
            <input class="val" type="text" value="II" aria-label="Stupeň požární bezpečnosti" />
          </div>
          <div class="risk">
            <div class="risk-cols"><span>Hodnota modelu</span><span>Hodnota vlastní</span></div>
            <div class="prow edge"><span></span><span class="cell"></span><span></span><span class="cell own"></span></div>
            <div v-for="p in params" :key="p.name" class="prow">
              <span class="strip" :class="p.tone">
                <label :for="'p-' + p.name">{{ p.name }}</label>
                <input :id="'p-' + p.name" type="checkbox" class="chk" checked disabled />
              </span>
              <span class="cell"><input class="val" type="text" :value="p.value" :aria-label="p.name + ' hodnota modelu'" disabled /></span>
              <span class="strip mid" :class="p.tone"><input type="checkbox" class="chk" :aria-label="p.name + ' vlastní'" /></span>
              <span class="cell own"><input class="val" type="text" :value="p.value" :aria-label="p.name + ' hodnota vlastní'" disabled /></span>
            </div>
            <div class="prow last"><span></span><span class="cell"></span><span></span><span class="cell own"></span></div>
            <button class="write">Zapsat parametr požárního rizika ( = 29,29)</button>
          </div>
        </section>
      </div>
    </div>
  </div>
</template>

<style>
body {
  margin: 0;
}
</style>

<style scoped>
* {
  box-sizing: border-box;
}

.app {
  position: relative;
  display: flex;
  flex-direction: column;
  height: 100vh;
  overflow: hidden;
  background: #3b4453;
  color: #e8eaed;
  font-family: 'Open Sans', 'Noto Sans', sans-serif;
  font-size: 14px;
}

button {
  font: inherit;
  color: inherit;
  background: none;
  border: 0;
  padding: 0;
  margin: 0;
}

svg {
  display: block;
  flex: none;
}

/* title bar */
.titlebar {
  display: flex;
  align-items: center;
  height: 32px;
  padding-right: 5px;
  background: #222933;
}

.quick {
  display: flex;
  align-items: center;
  gap: 5px;
  width: 722px;
  color: #80858c;
}

.logo {
  width: 28px;
  height: 26px;
  margin-right: 2px;
  background: #1569ff;
  border-left: 4px solid #6aa2ff;
  color: #fff;
  font-weight: 700;
  font-size: 17px;
  line-height: 24px;
  text-align: center;
}

.qbtn {
  width: 26px;
  display: flex;
  justify-content: center;
}

.qbtn svg,
.user svg {
  width: 20px;
  height: 20px;
}

.qsep {
  width: 1px;
  height: 26px;
  margin: 0 2px;
  background: #474f5c;
}

.qcaret {
  width: 12px;
  color: #dfe2e6;
  font-size: 12px;
  text-align: center;
}

.overflow {
  position: relative;
  width: 10px;
  height: 8px;
  border-top: 2px solid #c3c7cd;
}

.overflow::after {
  content: '';
  position: absolute;
  top: 2px;
  left: 0;
  border: 5px solid transparent;
  border-top-color: #c3c7cd;
  border-bottom: 0;
}

.doc-title {
  flex: 1;
  display: flex;
  justify-content: center;
  gap: 60px;
  padding-right: 62px;
  padding-bottom: 7px;
}

.account {
  display: flex;
  align-items: center;
  gap: 10px;
  width: 280px;
  font-size: 13px;
}

.tri-left {
  border: 5px solid transparent;
  border-right-color: #e8eaed;
  border-left: 0;
}

.user {
  display: flex;
  align-items: center;
  gap: 7px;
  width: 120px;
  margin-left: -4px;
  white-space: nowrap;
}

.cart {
  width: 32px;
}

.help {
  width: 18px;
  height: 18px;
  border-radius: 50%;
  background: #f2f4f8;
  color: #2357c4;
  font-weight: 700;
  line-height: 18px;
}

.window-btns {
  display: flex;
  justify-content: flex-end;
  gap: 14px;
  width: 156px;
}

.window-btns svg {
  width: 18px;
  height: 18px;
}

/* ribbon */
.tabs {
  display: flex;
  gap: 1px;
  height: 29px;
  padding-top: 4px;
  background: #222933;
}

.tab {
  padding: 0 12px;
  color: #f2f3f5;
  line-height: 23px;
  white-space: nowrap;
}

.tab.file {
  padding: 0 11px;
  background: #2a7ab0;
  margin-right: 2px;
}

.tab.active {
  background: #3b4453;
}

.ribbon {
  display: flex;
  gap: 3px;
  height: 119px;
  padding: 0 28px 0 2px;
}

.group {
  flex: 1 1 0;
  min-width: 0;
  display: flex;
  flex-direction: column;
  box-shadow: 2px 0 0 -1px #4b5463;
}

.group-items {
  display: flex;
  height: 96px;
}

.big-cell {
  flex: 1 1 0;
  min-width: 0;
  display: flex;
  justify-content: center;
  align-items: flex-start;
}

.big-btn {
  display: flex;
  flex-direction: column;
  align-items: center;
  padding-top: 8px;
  color: #666f7b;
  line-height: 19px;
  white-space: nowrap;
}

.big-btn svg {
  width: 40px;
  height: 40px;
  margin-bottom: 4px;
}

.big-caret {
  margin: 70px 0 0 3px;
  border: 3px solid transparent;
  border-top: 4px solid #a8adb5;
  border-bottom: 0;
}

.small-col {
  flex: 1 1 0;
  min-width: 0;
  display: flex;
  flex-direction: column;
  padding: 4px 0 0 7px;
}

.small-col.low {
  padding: 18px 0 0 3px;
}

.small-btn {
  display: flex;
  align-items: center;
  gap: 5px;
  height: 30px;
  color: #636c79;
  white-space: nowrap;
}

.small-btn svg {
  width: 20px;
  height: 20px;
  color: #525b69;
}

.group-title {
  height: 21px;
  background: #e99679;
  color: #fff;
  line-height: 20px;
  text-align: center;
  border-bottom: 1px solid #b98272;
}

.options-bar {
  height: 36px;
  border-top: 1px solid #20262f;
  border-bottom: 2px solid #4d5f6e;
}

/* work area */
.workspace {
  flex: 1;
  min-height: 0;
  display: grid;
  grid-template-columns: minmax(0, 1155fr) minmax(0, 1158fr) minmax(0, 247fr);
  background: #4a5668;
}

.pane {
  display: flex;
  flex-direction: column;
  min-height: 0;
  padding-right: 2px;
}

.pane.right {
  padding: 0 5px 0 2px;
}

.pane-tabs {
  display: flex;
  align-items: center;
  justify-content: space-between;
  height: 27px;
  padding-right: 9px;
  background: #474e62;
  border-bottom: 2px solid #2a313c;
}

.view-tab {
  display: flex;
  align-items: center;
  gap: 9px;
  align-self: stretch;
  width: 176px;
  padding: 0 4px;
  background: #3b4153;
  color: #9b9fa8;
}

.view-tab svg {
  width: 20px;
  height: 20px;
}

.view-tab.current {
  width: 158px;
  background: #222933;
  font-weight: 600;
}

.view-tab .tab-close {
  width: 12px;
  height: 12px;
  margin-left: auto;
}

.pane-body {
  flex: 1;
  display: flex;
  min-height: 0;
}

.canvas {
  position: relative;
  flex: 1;
  min-width: 0;
  border-left: 1px solid #222933;
  background: #fff;
}

.plan {
  width: 100%;
  height: 100%;
  font-family: 'Liberation Sans', Arial, sans-serif;
  fill: none;
}

.plan text {
  fill: #ee1620;
  text-anchor: middle;
}

.plan .t13 {
  font-size: 13px;
}

.plan .t17 {
  font-size: 17px;
}

.plan .t20 {
  font-size: 20px;
  text-anchor: start;
}

.plan .t24 {
  font-size: 24px;
}

.plan .start {
  text-anchor: start;
}

.plan .green {
  fill: #12a02c;
  background: none;
  font-weight: 700;
}

.plan .thin {
  stroke: #ee1620;
  stroke-width: 1.4;
}

.plan .tag-box {
  fill: #fff;
  stroke: #ee1620;
  stroke-width: 1.5;
}

.plan .tag-text {
  font-size: 16px;
  font-weight: 700;
}

.fire {
  stroke: #f8000c;
  stroke-width: 7;
  stroke-linecap: round;
}

.navbar {
  position: absolute;
  top: 1px;
  right: 1px;
  width: 43px;
  height: 146px;
  border: 2px solid #b5b1b6;
  border-radius: 8px;
  background: rgba(235, 232, 235, 0.6);
}

.vscroll {
  width: 23px;
  background: #313843;
  display: flex;
  flex-direction: column;
  align-items: center;
}

.chev-up {
  width: 9px;
  height: 9px;
  margin: 8px 0 24px;
  border: solid #98a0ab;
  border-width: 2px 0 0 2px;
  rotate: 45deg;
}

.thumb {
  width: 9px;
  height: 300px;
  margin-top: 34px;
  border-radius: 5px;
  background: #6c7d95;
}

.view-bar {
  display: flex;
  align-items: center;
  gap: 13px;
  height: 24px;
  padding-left: 32px;
  background: #2f3743;
  border-bottom: 1px solid #20262f;
  font-size: 13px;
  color: #c9ccd1;
}

.view-bar .scale {
  width: 60px;
}

.view-bar svg {
  width: 20px;
  height: 20px;
}

.less {
  font-size: 18px;
}

/* schedule */
.schedule {
  flex: 1;
  min-width: 0;
  overflow: hidden;
  background: #ededed;
  color: #111;
  font-family: 'Liberation Sans', Arial, sans-serif;
  font-size: 16px;
}

.schedule table {
  width: 1097px;
  table-layout: fixed;
  border-collapse: collapse;
  background: #fff;
}

.schedule th {
  padding: 0;
  font-weight: 400;
  line-height: 20px;
  vertical-align: bottom;
  white-space: nowrap;
  border-right: 1px solid #e6e6e6;
}

.schedule .h1 {
  height: 22px;
}

.schedule .h2 {
  height: 25px;
}

.schedule .over {
  border-bottom: 1px solid #e6e6e6;
}

.schedule .clip {
  height: 46px;
  overflow: hidden;
}

.schedule td {
  height: 24px;
  padding: 0 2px;
  line-height: 20px;
  white-space: nowrap;
  border-right: 1px solid #e6e6e6;
  border-bottom: 2px solid #ececec;
}

.schedule .blank td {
  height: 23px;
  background: #ededed;
}

.num {
  text-align: right;
}

.mid {
  text-align: center;
}

/* system browser */
.browser {
  display: flex;
  flex-direction: column;
  min-height: 0;
  padding-left: 2px;
  background: #222933;
}

.browser h2 {
  height: 22px;
  margin: 0;
  padding-left: 2px;
  font-size: 14px;
  font-weight: 400;
  line-height: 22px;
}

.browser-body {
  flex: 1;
  min-height: 0;
  display: flex;
  flex-direction: column;
  background: #eeeeee;
  color: #1b1b1b;
  font-size: 15px;
}

.browser select {
  appearance: none;
  height: 28px;
  margin: 6px 7px 8px 23px;
  padding: 0 4px;
  border: 1px solid #d0d0d0;
  border-right: 0;
  border-radius: 0;
  background: linear-gradient(45deg, transparent 44%, #777 44% 56%, transparent 56%) no-repeat right 11px / 6px 6px #fcfcfc;
  font: inherit;
  font-size: 14px;
  color: inherit;
}

.tree-row {
  flex: 1;
  min-height: 0;
  display: flex;
}

.tree {
  flex: 1;
  display: flex;
  flex-direction: column;
  background: #fff;
}

.tree-head {
  height: 24px;
  padding-left: 8px;
  line-height: 24px;
  font-size: 14px;
}

.tree ul {
  flex: 1;
  min-height: 0;
  display: flex;
  flex-direction: column;
  margin: 0;
  padding: 0;
  list-style: none;
}

.tree li {
  flex: 1 1 0;
  min-height: 0;
  display: flex;
  align-items: center;
  border-bottom: 1px solid #a8a8a8;
  line-height: 20px;
}

.tree li svg {
  width: 18px;
  height: 20px;
  margin-right: 9px;
}

.tree li.cut {
  flex: 0 0 7px;
  align-items: flex-start;
  overflow: hidden;
  border: 0;
}

.node {
  align-self: stretch;
  display: flex;
  align-items: center;
  width: 26px;
  padding-left: 5px;
  background:
    linear-gradient(90deg, #b9b9b9 50%, transparent 50%) 16px 50% / 2px 1px repeat-x content-box,
    repeating-linear-gradient(#b9b9b9 0 1px, transparent 1px 2px) 10px 0 / 1px 100% no-repeat;
}

.node button {
  width: 11px;
  height: 11px;
  border: 1px solid #8a8a8a;
  background: #f4f4f4;
  color: #223a8c;
  font-size: 11px;
  font-weight: 700;
  line-height: 8px;
}

.tree-scroll {
  width: 19px;
  padding: 22px 0 0 9px;
}

.tree-scroll span {
  display: block;
  width: 3px;
  height: 62%;
  background: #8a8a8a;
}

.hscroll {
  height: 19px;
  padding: 9px 0 0 21px;
}

.hscroll span {
  display: block;
  width: 99px;
  height: 3px;
  background: #8a8a8a;
}

.browser-tabs {
  display: flex;
  height: 30px;
  padding-top: 2px;
  color: #9ea3ab;
  white-space: nowrap;
}

.browser-tabs button {
  flex: 1;
  min-width: 0;
  overflow: hidden;
  background: #2f3644;
}

.browser-tabs .on {
  background: #1c2129;
}

/* status bar */
.status {
  display: flex;
  justify-content: space-between;
  align-items: center;
  height: 30px;
  padding: 0 90px 0 1px;
}

.status-icons {
  display: flex;
  align-items: center;
  gap: 12px;
}

.status-icons svg {
  width: 20px;
  height: 20px;
}

.status-icons span {
  margin-left: -11px;
}

/* dialog window over the workspace */
.dialog {
  position: absolute;
  top: 429px;
  right: 251px;
  bottom: 0;
  left: 704px;
  display: flex;
  flex-direction: column;
  border-radius: 11px;
  overflow: hidden;
  background: #fff;
  color: #404040;
  box-shadow: 0 0 0 1px rgba(80, 80, 80, 0.5), 0 6px 44px rgba(0, 0, 0, 0.4);
}

.dialog-title {
  display: flex;
  align-items: center;
  height: 38px;
  padding-left: 12px;
  background: #f1f3f5;
  color: #111;
}

.dialog-title > span {
  flex: 1;
}

.app-icon {
  width: 18px;
  height: 20px;
  margin-right: 7px;
}

.dialog-title button {
  width: 59px;
  display: flex;
  justify-content: center;
}

.dialog-title button svg {
  width: 14px;
  height: 14px;
}

.dialog-info {
  height: 38px;
  padding-left: 19px;
  background: #e5efd5;
  color: #222;
  line-height: 38px;
}

.dialog-body {
  flex: 1;
  min-height: 0;
  display: grid;
  grid-template-columns: minmax(0, 500fr) minmax(0, 688fr) minmax(0, 367fr);
  gap: 12px;
  padding: 12px 12px 13px 13px;
}

.col {
  display: flex;
  flex-direction: column;
  min-height: 0;
}

.caption {
  height: 38px;
  flex: none;
  margin: 0;
  padding-left: 12px;
  background: #eeeeee;
  font-size: 14px;
  font-weight: 600;
  line-height: 41px;
}

.w-list {
  width: 200px;
}

.w-spaces {
  width: 225px;
}

.w-open {
  width: 215px;
  margin-top: 17px;
}

.grid-box {
  border: 1px solid #dcdcdc;
  background: #eeeeee;
  min-height: 0;
}

.with-scroll {
  flex: 1;
  display: flex;
  border-left: 0;
}

.spaces-box {
  flex: 374 1 0;
}

.openings-box {
  flex: 331 1 0;
}

.grid {
  width: 100%;
  table-layout: fixed;
  border-collapse: collapse;
}

.with-scroll .grid {
  flex: 1 1 0;
  min-width: 0;
  align-self: flex-start;
}

.grid th {
  height: 30px;
  padding: 0 6px;
  background: #3d3d3d;
  color: #fff;
  font-weight: 700;
  text-align: left;
  white-space: nowrap;
}

.grid td {
  height: 30px;
  padding: 0 4px 5px;
  background: #fff;
  border: 1px solid #d8d8d8;
  font-weight: 600;
  white-space: nowrap;
  overflow: hidden;
}

.grid td.light {
  font-weight: 400;
}

.grid .r {
  text-align: right;
  padding-right: 2px;
}

.grid .selected td {
  background: #0078d7;
  color: #fff;
}

.grid .selected td:first-child {
  box-shadow: inset 0 0 0 1px #000;
}

.l-id {
  width: 69px;
}

.l-name {
  width: 100px;
}

.l-use {
  width: 189px;
}

.s-id {
  width: 69px;
}

.s-area {
  width: 63px;
}

.s-num {
  width: 37px;
}

.s-item {
  width: 77px;
}

.o-cat {
  width: 75px;
}

.o-chk {
  width: 20px;
}

.openings th:last-child {
  padding: 0;
}

.grid-scroll {
  width: 22px;
  display: flex;
  flex-direction: column;
  align-items: center;
}

.chev {
  width: 8px;
  height: 8px;
  border: solid #b0b0b0;
  border-width: 2px 0 0 2px;
  rotate: 45deg;
}

.chev.up {
  margin: 39px 0 5px;
}

.chev.down {
  margin: auto 0 10px;
  rotate: 225deg;
}

.grid-thumb {
  width: 22px;
  height: 283px;
  background: #cdcdcd;
}

.notice {
  margin: 0;
  padding: 8px 6px 3px;
  background: #3d3d3d;
  color: #fff;
  font-weight: 700;
  line-height: 20px;
  border-bottom: 1px solid #777;
}

.risk-head {
  display: flex;
  justify-content: space-between;
  height: 38px;
  padding-right: 6px;
  flex: none;
}

.risk-head h3 {
  width: 206px;
  margin: 0;
  padding-left: 12px;
  background: #eeeeee;
  font-size: 14px;
  font-weight: 600;
  line-height: 36px;
}

.risk-head .val {
  margin-top: 6px;
}

.val {
  width: 113px;
  height: 25px;
  padding: 0 3px;
  border: 1px solid #d2d2d2;
  background: #fdfdfd;
  color: #858585;
  font: inherit;
  text-align: right;
}

.risk {
  flex: 1;
  min-height: 0;
  display: flex;
  flex-direction: column;
  background: #eeeeee;
}

.risk-cols {
  display: flex;
  height: 28px;
  gap: 57px;
  padding-left: 70px;
  line-height: 34px;
  color: #666;
}

.prow {
  display: grid;
  grid-template-columns: 68fr 138fr 30fr 131fr;
  height: 35px;
}

.prow.edge {
  height: 6px;
}

.prow.edge .cell {
  border-top: 1px solid #d6d6d6;
}

.prow.last {
  height: 20px;
}

.prow.last .cell {
  border-bottom: 1px solid #d6d6d6;
}

.cell {
  display: flex;
  align-items: center;
  justify-content: flex-end;
  padding-right: 12px;
  background: #f9f9f9;
  border: solid #dadada;
  border-width: 0 1px;
}

.cell.own {
  padding-right: 6px;
  border-right: 0;
}

.strip {
  display: flex;
  align-items: center;
  justify-content: space-between;
  padding: 0 6px;
  color: #111;
}

.red {
  background: #ffeeed;
}

.green {
  background: #effff0;
}

.blue {
  background: #f0f0ff;
}

.gray {
  background: #dfdfdf;
}

.dark {
  background: #c4c4c4;
}

.chk {
  appearance: none;
  display: grid;
  place-items: center;
  width: 18px;
  height: 18px;
  margin: 0;
  border: 1px solid #707070;
  background: #fff;
}

.chk:disabled {
  border-color: #c2c2c2;
  background: #e6e6e6;
}

.chk:checked::after {
  content: '';
  width: 11px;
  height: 6px;
  margin-bottom: 4px;
  border: solid #6a6a6a;
  border-width: 0 0 2px 2px;
  rotate: -45deg;
}

.write {
  height: 42px;
  margin: auto 0 0;
  background: #b41b00;
  color: #fff;
}
</style>
